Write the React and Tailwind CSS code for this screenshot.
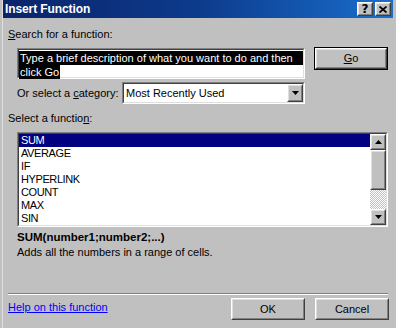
import React from "react";

const Raised = ({ className = "", children }) => (
  <div className={`border border-t-white border-l-white border-b-[#404040] border-r-[#404040] bg-[#c0c0c0] ${className}`}>
    <div className="w-full h-full border border-t-[#dfdfdf] border-l-[#dfdfdf] border-b-[#808080] border-r-[#808080] flex items-center justify-center">
      {children}
    </div>
  </div>
);

const Sunken = ({ className = "", innerClass = "", children }) => (
  <div className={`border border-t-[#808080] border-l-[#808080] border-b-white border-r-white ${className}`}>
    <div className={`w-full h-full border border-t-[#404040] border-l-[#404040] border-b-[#dfdfdf] border-r-[#dfdfdf] bg-white ${innerClass}`}>
      {children}
    </div>
  </div>
);

const TriUp = () => (
  <svg width="7" height="4" viewBox="0 0 7 4" className="block">
    <polygon points="3.5,0 7,4 0,4" fill="#000" />
  </svg>
);
const TriDown = () => (
  <svg width="7" height="4" viewBox="0 0 7 4" className="block">
    <polygon points="0,0 7,0 3.5,4" fill="#000" />
  </svg>
);

const items = ["SUM", "AVERAGE", "IF", "HYPERLINK", "COUNT", "MAX", "SIN"];

export default function App() {
  return (
    <div className="w-[396px] h-[328px] bg-[#c0c0c0] overflow-hidden font-['Liberation_Sans',Arial,sans-serif] text-[11px] text-black leading-[13px] flex flex-col border-l-2 border-l-[#c0c0c0] border-r-[3px] border-r-[#c0c0c0] relative">
      <div className="absolute left-0 top-0 w-px h-full bg-[#dfdfdf]" />
      {/* Title bar */}
      <div className="ml-px h-[18px] flex items-center justify-between bg-linear-to-r from-[#0a246a] via-[#0d3b8c] to-[#1a6fcc] pl-[2px] pr-[2px]">
        <span className="text-white font-bold text-[12px] leading-[14px] tracking-[-0.1px]">Insert Function</span>
        <div className="flex gap-[2px]">
          <Raised className="w-[16px] h-[14px]">
            <span className="font-bold text-[12px] leading-[10px] font-['DejaVu_Sans',sans-serif]">?</span>
          </Raised>
          <Raised className="w-[16px] h-[14px]">
            <svg width="8" height="7" viewBox="0 0 8 7" className="block">
              <path d="M0.5 0.5 L7.5 6.5 M7.5 0.5 L0.5 6.5" stroke="#000" strokeWidth="1.8" />
            </svg>
          </Raised>
        </div>
      </div>

      {/* Search label */}
      <div className="mt-[10px] ml-[6px] h-[13px]">
        <span className="underline">S</span>earch for a function:
      </div>

      {/* Search row */}
      <div className="mt-[6px] ml-[15px] flex">
        <Sunken className="mt-px w-[288px] h-[31px]" innerClass="pt-px">
          <div className="bg-black text-white pl-px leading-[14px] whitespace-nowrap">
            Type a brief description of what you want to do and then
          </div>
          <div className="inline-block bg-black text-white pl-px pr-px leading-[14px] whitespace-nowrap">
            click Go
          </div>
        </Sunken>
        <div className="ml-[9px] w-[74px] h-[23px] border border-black">
          <Raised className="w-full h-full">
            <span>
              <span className="underline">G</span>o
            </span>
          </Raised>
        </div>
      </div>

      {/* Category row */}
      <div className="mt-[3px] ml-[15px] flex items-center h-[22px]">
        <div className="w-[105px]">
          Or select a <span className="underline">c</span>ategory:
        </div>
        <Sunken className="w-[183px] h-[22px]" innerClass="flex items-center justify-between">
          <span className="pl-[2px]">Most Recently Used</span>
          <Raised className="w-[16px] h-[18px]">
            <TriDown />
          </Raised>
        </Sunken>
      </div>

      {/* Select a function label */}
      <div className="mt-[8px] ml-[6px] h-[13px]">
        Select a functio<span className="underline">n</span>:
      </div>

      {/* Listbox */}
      <Sunken className="mt-[7px] ml-[15px] w-[371px] h-[95px]" innerClass="flex">
        <div className="flex-1 flex flex-col">
          {items.map((it, i) => (
            <div
              key={it}
              className={`h-[13px] pl-[2px] leading-[13px] tracking-[-0.4px] ${i === 0 ? "bg-[#000080] text-white" : ""}`}
            >
              {it}
            </div>
          ))}
        </div>
        <div className="w-[16px] flex flex-col">
          <Raised className="w-[16px] h-[16px]">
            <TriUp />
          </Raised>
          <Raised className="w-[16px] h-[40px]" />
          <div className="flex-1 bg-[image:repeating-conic-gradient(#c0c0c0_0%_25%,#ffffff_0%_50%)] bg-[length:2px_2px]" />
          <Raised className="w-[16px] h-[16px]">
            <TriDown />
          </Raised>
        </div>
      </Sunken>

      {/* Syntax and description */}
      <div className="mt-[4px] ml-[15px] font-bold text-[11.5px] leading-[13px]">SUM(number1;number2;...)</div>
      <div className="mt-[2px] ml-[15px] leading-[13px]">Adds all the numbers in a range of cells.</div>

      {/* Separator */}
      <div className="mt-[34px] ml-[6px] w-[380px] h-[2px] border-t border-t-[#808080] border-b border-b-white" />

      {/* Bottom row */}
      <div className="mt-[3px] flex items-start justify-between">
        <a className="ml-[6px] mt-[3px] text-[#0000ff] underline leading-[13px]" href="#">
          Help on this function
        </a>
        <div className="flex gap-[10px] mr-[4px]">
          <Raised className="w-[74px] h-[22px]">OK</Raised>
          <Raised className="w-[74px] h-[22px]">Cancel</Raised>
        </div>
      </div>
    </div>
  );
}
